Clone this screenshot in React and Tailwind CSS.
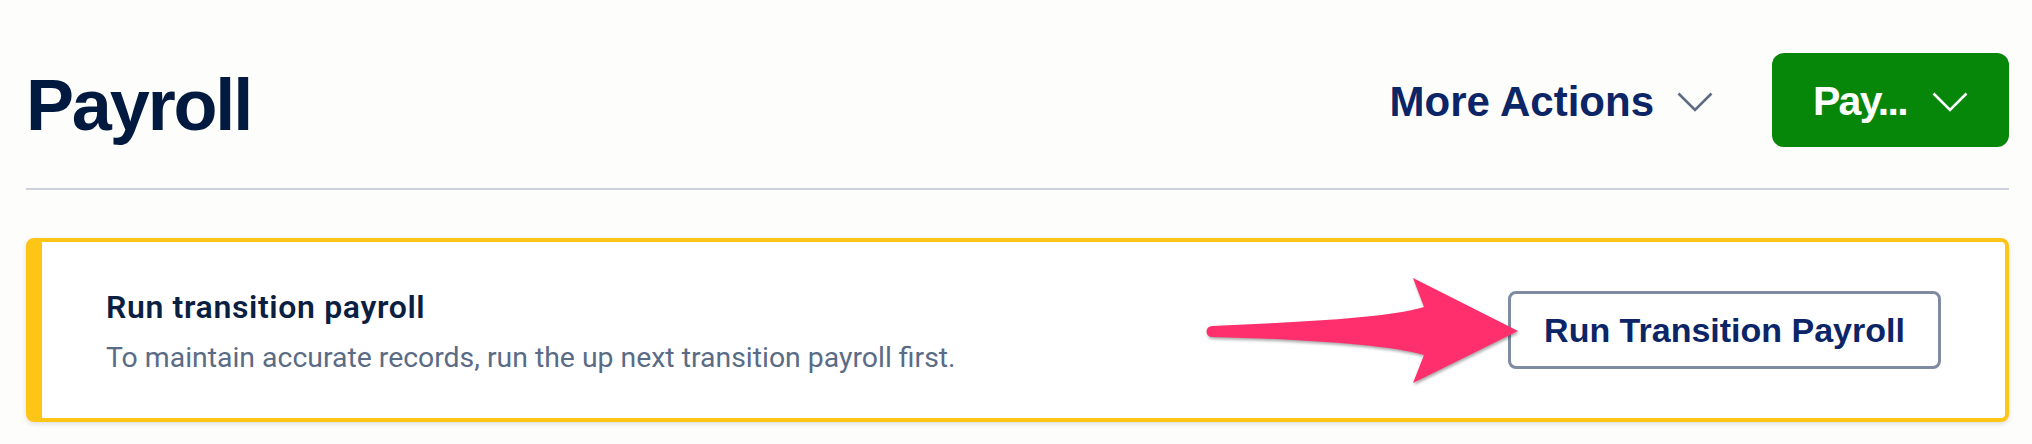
import React from 'react'

function Chevron({ className }) {
  return (
    <svg className={className} width="36" height="20" viewBox="0 0 36 20" fill="none">
      <path d="M1.5 1.5 L18 18 L34.5 1.5" stroke="currentColor" strokeWidth="2.6" strokeLinecap="butt" strokeLinejoin="miter" />
    </svg>
  )
}

function PinkArrow() {
  // annotation arrow drawn over the card, pointing at the button
  return (
    <svg
      className="absolute left-[-308px] top-[-21px] drop-shadow-[1px_2px_1.5px_rgba(0,0,0,0.35)]"
      width="325"
      height="120"
      viewBox="0 0 325 120"
    >
      <path
        d="M318 61 L213 8 L224 37 C190 48 100 52 12 56 A5.5 5.5 0 0 0 12 67 C100 69 190 75 224 85 L213 113 Z"
        fill="#ff2e6c"
      />
    </svg>
  )
}

export default function App() {
  return (
    <div className="min-h-[444px] bg-[#fdfdfc] pl-[26px] pr-[23px] pt-[53px] font-['Liberation_Sans',Arial,sans-serif]">
      {/* Header */}
      <div className="flex h-[94px] items-center justify-between">
        <h1 className="pt-[10px] text-[72px] font-bold leading-none tracking-[-0.03em] text-[#021a40]">
          Payroll
        </h1>
        <div className="flex items-center gap-[59px]">
          <button className="flex items-center gap-[23px] pt-[3px]">
            <span className="text-[42px] font-bold leading-none text-[#0c2566]">More Actions</span>
            <Chevron className="text-[#5d6c82]" />
          </button>
          <button className="flex h-[94px] w-[237px] items-center justify-center gap-[25px] rounded-[12px] bg-[#07870a] pt-[3px] text-white">
            <span className="text-[41px] font-bold leading-none tracking-[-0.04em]">Pay...</span>
            <Chevron className="text-white" />
          </button>
        </div>
      </div>

      <div className="mt-[41px] h-[2px] bg-[#cdd2dc]" />

      {/* Transition payroll banner */}
      <div className="mt-[48px] flex h-[184px] items-center justify-between rounded-[8px] border-[4px] border-l-[16px] border-[#fec516] bg-white px-[64px] shadow-[0_2px_5px_rgba(0,0,0,0.12)]">
        <div className="pt-[3px] font-['Roboto','Noto_Sans',sans-serif]">
          <div className="text-[32px] font-semibold leading-[40px] tracking-[0.02em] text-[#0b1f43]">Run transition payroll</div>
          <div className="mt-[13px] text-[28.4px] leading-[36px] text-[#5a6b85]">
            To maintain accurate records, run the up next transition payroll first.
          </div>
        </div>
        <div className="relative">
          <PinkArrow />
          <button className="flex h-[78px] w-[433px] items-center justify-center rounded-[8px] border-[3px] border-[#7e8ba1] bg-white">
            <span className="text-[34px] font-bold leading-none text-[#0c2566]">
              Run Transition Payroll
            </span>
          </button>
        </div>
      </div>
    </div>
  )
}
